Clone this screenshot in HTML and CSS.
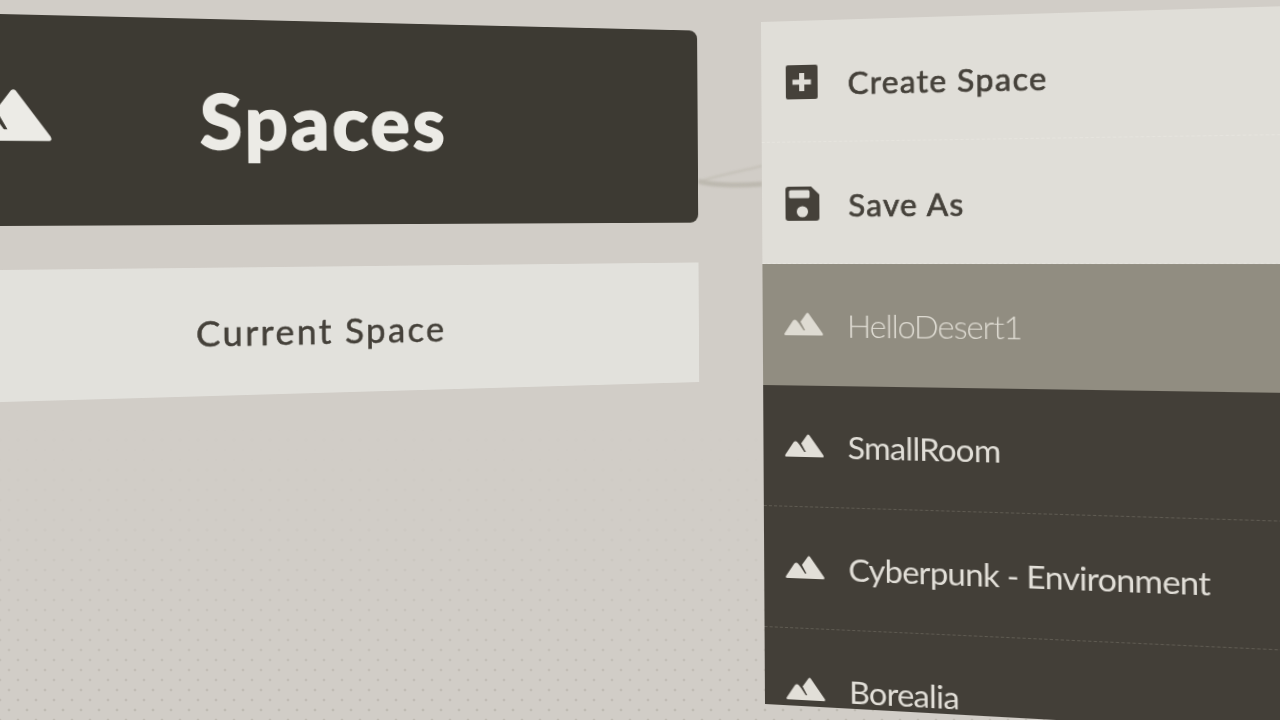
FILE: index.html
```html
<!DOCTYPE html>
<html lang="en">
<head>
  <meta charset="UTF-8" />
  <title>Spaces</title>
  <link rel="stylesheet" href="styles.css">
</head>
<body>
  <svg width="0" height="0" class="defs">
    <symbol id="mountain" viewBox="0 0 40 24" preserveAspectRatio="none">
      <path d="M23 1Q24 0 25 1L39.500 21Q40.500 23 38.500 23H1.500Q-.5 23 .5 21L9 8.500Q11 6.500 13 8.500L15.500 11.500L20 18L21.500 18L16.800 9.500Z" fill="currentColor"/>
    </symbol>
  </svg>

  <div class="stage">
    <div class="floor"></div>

    <svg class="wire" width="70" height="40" viewBox="0 0 70 40">
      <path d="M0 24C20 17 40 14 64 8" fill="none" stroke="#c4c0b7" stroke-width="2"/>
      <path d="M0 23C12 27 40 28 64 26" fill="none" stroke="#bdb9b0" stroke-width="5"/>
    </svg>

    <!-- Left panel -->
    <section class="panel-left">
      <header class="title-bar">
        <svg class="title-icon"><use href="#mountain"/></svg>
        <h1>Spaces</h1>
      </header>
      <div class="current">Current Space</div>
    </section>

    <!-- Right panel -->
    <section class="panel-right">
      <div class="row row-action">
        <svg class="icon icon-action" viewBox="0 0 38 34">
          <path d="M3 0H30Q32 0 32 2V32Q32 34 30 34H3Q1 34 1 32V2Q1 0 3 0ZM14 8V14.500H7.500V19.500H14V26H19V19.500H25.500V14.500H19V8Z" fill="currentColor" fill-rule="evenodd"/>
        </svg>
        <span>Create Space</span>
      </div>
      <div class="row row-action">
        <svg class="icon icon-action" viewBox="0 0 38 34">
          <path d="M3 0H25L33 8V31Q33 34 30 34H3Q0 34 0 31V3Q0 0 3 0ZM5 3.500Q3.500 3.500 3.500 5V10Q3.500 11.500 5 11.500H22Q23.500 11.500 23.500 10V5Q23.500 3.500 22 3.500ZM16.500 19.500A5.500 5.500 0 1 0 16.500 30.500A5.500 5.500 0 1 0 16.500 19.500Z" fill="currentColor" fill-rule="evenodd"/>
        </svg>
        <span>Save As</span>
      </div>
      <div class="row row-selected">
        <svg class="icon icon-space"><use href="#mountain"/></svg>
        <span>HelloDesert1</span>
      </div>
      <div class="row row-space">
        <svg class="icon icon-space"><use href="#mountain"/></svg>
        <span>SmallRoom</span>
      </div>
      <div class="row row-space">
        <svg class="icon icon-space"><use href="#mountain"/></svg>
        <span>Cyberpunk - Environment</span>
      </div>
      <div class="row row-space">
        <svg class="icon icon-space"><use href="#mountain"/></svg>
        <span>Borealia</span>
      </div>
    </section>
  </div>
</body>
</html>
```

FILE: styles.css
```css
:root {
  --bg: #d1cdc7;
  --dark: #3d3a33;
  --row-dark: #433f38;
  --row-selected: #918d81;
  --light: #e0ded8;
  --text-dark: #45413a;
  --text-light: #e2dfd8;
}

* {
  box-sizing: border-box;
}

html, body {
  margin: 0;
  height: 100%;
}

body {
  background: var(--bg);
  font-family: "Lato", sans-serif;
  overflow: hidden;
}

.defs {
  position: absolute;
}

.stage {
  position: relative;
  width: 1280px;
  height: 720px;
  overflow: hidden;
}

.floor {
  position: absolute;
  left: 0;
  right: 0;
  top: 420px;
  bottom: 0;
  background-image:
    radial-gradient(circle, rgba(165,160,150,0.4) 0.8px, transparent 1.8px),
    radial-gradient(circle, rgba(165,160,150,0.4) 0.8px, transparent 1.8px);
  background-size: 18px 20px;
  background-position: 0 0, 9px 10px;
  -webkit-mask-image: linear-gradient(to bottom, transparent 0, rgba(0,0,0,0.15) 35%, #000 100%);
  mask-image: linear-gradient(to bottom, transparent 0, rgba(0,0,0,0.15) 35%, #000 100%);
}

.wire {
  position: absolute;
  left: 698px;
  top: 158px;
  filter: blur(1px);
}

.panel-left {
  position: absolute;
  left: -93px;
  top: 0;
  width: 826px;
  transform-origin: 93px 0;
  transform: matrix3d(1.05, 0.027, 0, 0.000142, 0.006, 1, 0, 0, 0, 0, 1, 0, 0, 14, 0, 1);
  display: flex;
  flex-direction: column;
  gap: 44px;
  filter: blur(0.4px);
}

.title-bar {
  height: 212px;
  background: var(--dark);
  color: #ecebe6;
  border-radius: 0 9px 9px 0;
  display: flex;
  align-items: center;
  padding-left: 50px;
  gap: 146px;
}

.title-icon {
  width: 92px;
  height: 55px;
  margin-top: -9px;
}

h1 {
  margin: -4px 0 0;
  font-size: 78px;
  font-weight: 900;
  line-height: 1;
  letter-spacing: 3px;
  -webkit-text-stroke: 1.500px #ecebe6;
}

.current {
  height: 132px;
  background: #e2e1dc;
  color: var(--text-dark);
  font-size: 37px;
  font-weight: 400;
  letter-spacing: 2.400px;
  -webkit-text-stroke: 0.5px var(--text-dark);
  display: flex;
  align-items: center;
  justify-content: center;
}

.panel-right {
  position: absolute;
  left: 0;
  top: 0;
  width: 540px;
  height: 682px;
  overflow: hidden;
  transform-origin: 0 0;
  transform: matrix3d(0.919, -0.03353, 0, -0.000127, 0.00587, 1, 0, 0, 0, 0, 1, 0, 761, 22, 0, 1);
  filter: blur(0.4px);
}

.row {
  height: 121px;
  display: flex;
  align-items: center;
  gap: 23px;
  padding-left: 21px;
  font-size: 31px;
  letter-spacing: -0.7px;
}

.icon {
  width: 38px;
  height: 34px;
  flex: none;
}

.icon-action {
  margin-top: 2px;
}

.icon-space {
  height: 24px;
  margin-top: -1px;
}

.row-action {
  background: var(--light);
  color: var(--text-dark);
  font-weight: 400;
  font-size: 30px;
  letter-spacing: 1.300px;
  -webkit-text-stroke: 0.7px var(--text-dark);
  padding-left: 23px;
  border-bottom: 1px dashed #e6e4de;
}

.row-action span {
  margin-top: 3px;
}

.row-selected {
  background: var(--row-selected);
  color: #dedbd2;
  font-weight: 300;
  letter-spacing: -1.100px;
}

.row-space {
  background: var(--row-dark);
  color: var(--text-light);
  border-bottom: 1px dashed #5f5b52;
}
```
